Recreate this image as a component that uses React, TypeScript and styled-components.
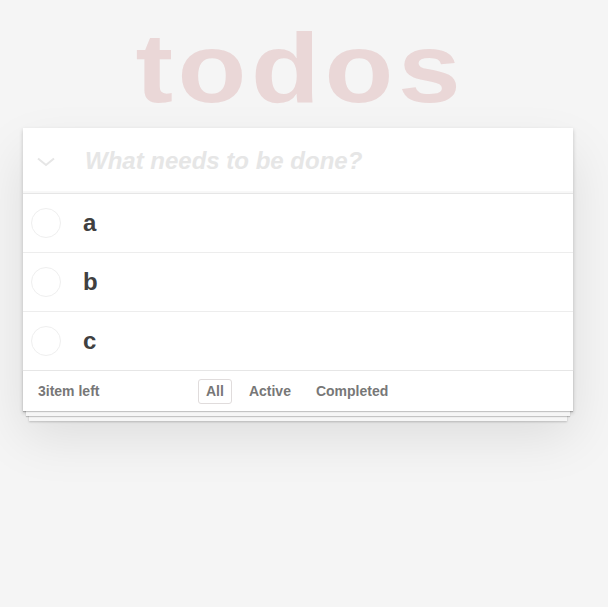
import React from "react";
import styled, { createGlobalStyle } from "styled-components";

const Global = createGlobalStyle`
  html, body {
    margin: 0;
    padding: 0;
    background: #f5f5f5;
  }
  body {
    font-family: "Liberation Sans", Arial, Helvetica, sans-serif;
    font-weight: 700;
    color: #4d4d4d;
  }
`;

const Page = styled.div`
  min-height: 607px;
  box-sizing: border-box;
  padding-left: 23px;
  padding-bottom: 40px;
  width: 573px;
`;

const Title = styled.h1`
  margin: 0;
  box-sizing: border-box;
  height: 128px;
  padding-top: 19px;
  text-align: center;
  font-size: 98px;
  line-height: 98px;
  font-weight: 700;
  color: rgba(175, 47, 47, 0.15);
`;

const TitleText = styled.span`
  display: inline-block;
  letter-spacing: 4px;
  margin-right: -4px;
  transform: scaleX(1.15);
  transform-origin: center;
`;

const Card = styled.section`
  background: #fff;
  box-shadow: 0 2px 4px rgba(0, 0, 0, 0.2), 0 25px 50px rgba(0, 0, 0, 0.1);
`;

const Header = styled.div`
  display: flex;
  align-items: center;
  height: 65px;
  box-shadow: inset 0 -2px 1px rgba(0, 0, 0, 0.03);
`;

const ToggleAll = styled.div`
  width: 60px;
  display: flex;
  justify-content: center;
  padding-right: 14px;
  box-sizing: border-box;
  padding-top: 3px;
`;

const NewTodo = styled.input`
  flex: 1;
  border: none;
  outline: none;
  background: transparent;
  font-family: inherit;
  font-size: 24px;
  font-weight: 700;
  padding: 0 0 0 2px;
  color: #4d4d4d;
  &::placeholder {
    font-style: italic;
    color: #e6e6e6;
  }
`;

const List = styled.ul`
  list-style: none;
  margin: 0;
  padding: 0;
  border-top: 1px solid #e6e6e6;
`;

const Row = styled.li<{ $last?: boolean }>`
  display: flex;
  align-items: center;
  height: 58px;
  border-bottom: ${(p) => (p.$last ? "none" : "1px solid #ededed")};
`;

const Check = styled.span`
  box-sizing: border-box;
  width: 30px;
  height: 30px;
  margin: 0 22px 0 8px;
  border-radius: 50%;
  border: 1px solid #efefef;
`;

const Label = styled.span`
  font-size: 24px;
  color: #404040;
  line-height: 28px;
`;

const Footer = styled.footer`
  position: relative;
  display: flex;
  align-items: center;
  height: 40px;
  padding: 0 15px;
  border-top: 1px solid #e6e6e6;
  font-size: 14px;
  color: #777;
  box-shadow: 0 1px 1px rgba(0, 0, 0, 0.2), 0 8px 0 -3px #f6f6f6,
    0 9px 1px -3px rgba(0, 0, 0, 0.2), 0 16px 0 -6px #f6f6f6,
    0 17px 2px -6px rgba(0, 0, 0, 0.2);
`;

const Count = styled.span`
  width: 160px;
`;

const Filters = styled.ul`
  list-style: none;
  margin: 0;
  padding: 0;
  display: flex;
  gap: 9px;
`;

const Filter = styled.li<{ $selected?: boolean }>`
  padding: 3px 7px;
  line-height: 17px;
  border-radius: 3px;
  border: 1px solid ${(p) => (p.$selected ? "#e0dcdc" : "transparent")};
  color: #777;
`;

export default function App() {
  return (
    <>
      <Global />
      <Page>
        <Title>
          <TitleText>todos</TitleText>
        </Title>
        <Card>
          <Header>
            <ToggleAll>
              <svg width="18" height="10" viewBox="0 0 18 10">
                <polyline points="1,1.5 9,8 17,1.5" fill="none" stroke="#e6e6e6" strokeWidth="2" />
              </svg>
            </ToggleAll>
            <NewTodo placeholder="What needs to be done?" />
          </Header>
          <List>
            {["a", "b", "c"].map((t, i) => (
              <Row key={t} $last={i === 2}>
                <Check />
                <Label>{t}</Label>
              </Row>
            ))}
          </List>
          <Footer>
            <Count>3item left</Count>
            <Filters>
              <Filter $selected>All</Filter>
              <Filter>Active</Filter>
              <Filter>Completed</Filter>
            </Filters>
          </Footer>
        </Card>
      </Page>
    </>
  );
}
